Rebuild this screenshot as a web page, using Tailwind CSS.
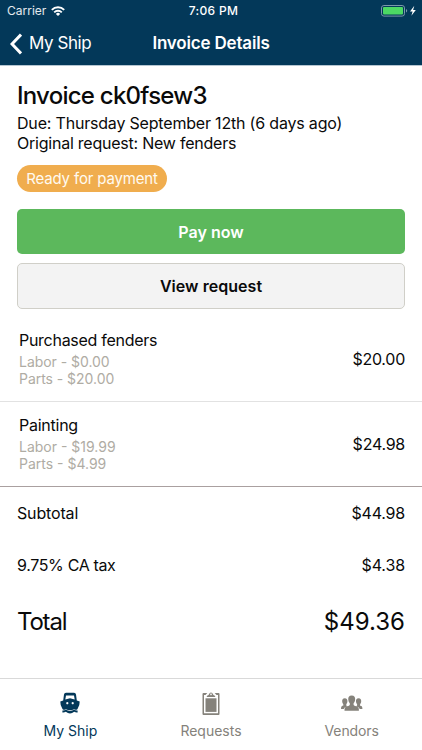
<!DOCTYPE html>
<html lang="en">
<head>
<meta charset="utf-8">
<meta name="viewport" content="width=device-width, initial-scale=1">
<title>Invoice Details</title>
<script src="https://cdn.jsdelivr.net/npm/@tailwindcss/browser@4"></script>
</head>
<body class="bg-white">
<div class="flex h-[750px] w-[422px] flex-col overflow-hidden bg-white font-['Inter',sans-serif] text-base text-[#0a0a0a]">
  <header class="h-[66px] shrink-0 border-b border-[#b5c6d2] bg-[#033859] text-white">
    <div class="grid h-[22px] grid-cols-3 items-center pr-[5px] pl-[7px] text-xs">
      <div class="flex items-center gap-[5px]"><span class="text-white/90">Carrier</span>
        <svg class="h-[10px] w-[14px]" viewBox="0 0 14 10" fill="none" stroke="currentColor" stroke-width="1.9"><path d="M.8 3.800a8.800 8.800 0 0 1 12.400 0M3.200 6.300a5.400 5.400 0 0 1 7.600 0"/><path d="M7 10 4.900 7.900a3 3 0 0 1 4.200 0z" fill="currentColor" stroke="none"/></svg>
      </div>
      <span class="pl-[3px] text-center font-medium tracking-[0.3px]">7:06 PM</span>
      <svg class="h-[12px] w-[36px] justify-self-end" viewBox="0 0 36 12"><rect x=".5" y=".5" width="23" height="10.6" rx="2.4" fill="none" stroke="#7b98aa"/><rect x="2" y="2" width="20" height="7.6" rx="1" fill="#4cd964"/><path d="M25 4v3.600q1.200-.5 1.200-1.800T25 4z" fill="#7b98aa"/><path d="M33.300.8 29 6.500h2.600l-1.200 4.300 4.400-5.900h-2.700z" fill="#fff"/></svg>
    </div>
    <div class="grid h-[43px] grid-cols-[1fr_auto_1fr] items-center text-[17px]">
      <div class="flex items-center gap-[7px] pl-[10px]">
        <svg class="h-[22px] w-[12px]" viewBox="0 0 12 22" fill="none" stroke="currentColor" stroke-width="3"><path d="M11 1.500 2 11l9 9.500"/></svg>
        <span class="tracking-[-0.45px]">My Ship</span>
      </div>
      <h1 class="font-semibold tracking-[-0.18px]">Invoice Details</h1>
    </div>
  </header>

  <main class="flex flex-1 flex-col">
    <section class="flex flex-col px-[17px] pt-[14px]">
      <h2 class="h-[33px] text-[24px] leading-[31px] font-medium tracking-[-0.75px]">Invoice ck0fsew3</h2>
      <p class="leading-[20px] tracking-[-0.19px]">Due: Thursday September 12th (6 days ago)</p>
      <p class="leading-[20px] tracking-[-0.23px]">Original request: New fenders</p>
      <span class="mt-[12px] flex h-[27px] w-[150px] items-center justify-center rounded-full bg-[#f0ad4e] pt-px text-[15px] tracking-[-0.16px] text-[#fffaf0]">Ready for payment</span>
      <button class="mt-[17px] h-[45px] rounded-[5px] bg-[#5cb85c] font-semibold text-white">Pay now</button>
      <button class="mt-[9px] h-[46px] rounded-[5px] border border-[#d0cfc8] bg-[#f3f3f3] font-semibold tracking-[0.05px]">View request</button>
    </section>

    <section class="mt-[8px]">
      <div class="flex h-[85px] items-center justify-between border-b border-[#e2e2e2] pr-[17px] pl-[19px]">
        <div class="pb-[2px]"><h3 class="mb-[3px] leading-[20px] tracking-[-0.28px]">Purchased fenders</h3>
          <p class="text-[14px] leading-[17px] tracking-[-0.04px] text-[#afaca4]">Labor - $0.00</p><p class="text-[14px] leading-[17px] tracking-[-0.04px] text-[#afaca4]">Parts - $20.00</p></div>
        <span class="tracking-[-0.25px]">$20.00</span>
      </div>
      <div class="flex h-[85px] items-center justify-between border-b border-[#aaa0a0] pr-[17px] pl-[19px]">
        <div class="pb-[2px]"><h3 class="mb-[3px] leading-[20px] tracking-[-0.25px]">Painting</h3>
          <p class="text-[14px] leading-[17px] text-[#afaca4]">Labor - $19.99</p><p class="text-[14px] leading-[17px] text-[#afaca4]">Parts - $4.99</p></div>
        <span class="tracking-[-0.25px]">$24.98</span>
      </div>
    </section>

    <section class="px-[17px]">
      <div class="flex h-[52px] items-center justify-between"><span class="tracking-[-0.15px]">Subtotal</span><span class="tracking-[-0.2px]">$44.98</span></div>
      <div class="flex h-[52px] items-center justify-between"><span class="tracking-[-0.35px]">9.75% CA tax</span><span class="tracking-[-0.1px]">$4.38</span></div>
      <div class="flex h-[60px] items-center justify-between pt-[2px] text-[24px]"><span class="tracking-[-1.2px]">Total</span><span>$49.36</span></div>
    </section>
  </main>

  <nav class="grid h-[72px] shrink-0 grid-cols-3 border-t border-[#d9d9d9] text-[14px] text-[#85827b]">
    <a class="flex flex-col items-center pt-[13px] text-[#033859]">
      <svg class="h-[24px] w-[24px]" viewBox="0 0 24 24" fill="currentColor"><path fill-rule="evenodd" d="M6 2.500Q6.200.7 8 .7h8q1.800 0 2 1.800l.8 5.900 2.900 1.200q.3 3.600-2.300 7.600-1.500 1.200-3.200 0-4.200 2.300-8.400 0-1.700 1.200-3.200 0Q2 13.200 2.300 9.600l2.900-1.200zM8 3.600l-.7 4L12 6.200l4.700 1.400-.7-4zM9.300 10a1.100 1.100 0 1 0 .01 0zM14.700 10a1.100 1.100 0 1 0 .01 0z"/><path d="M4.400 18.500q1.800.3 3.400-.7 4.200 2.200 8.400 0 1.600 1 3.400.7v1.900q-1.900.2-3.400-.6-4.200 3.600-8.400 0-1.500.8-3.400.6z"/></svg>
      <span class="mt-[5px] leading-[20px]">My Ship</span>
    </a>
    <a class="flex flex-col items-center pt-[13px]">
      <svg class="h-[24px] w-[24px]" viewBox="0 0 24 24" fill="currentColor"><path d="M4.500 1h3.800L6.500 3H5v18.200h14V3h-1.500l-1.800-2h3.800q1 0 1 1v20q0 1-1 1h-15q-1 0-1-1V2q0-1 1-1z"/><path d="M6.500 6.300h11v13.600h-11z"/><path fill-rule="evenodd" d="M7.600 4.900q.1-1.500 1.900-1.900.4-.2.600-.9Q10.500.4 12 .4t1.900 1.700q.2.700.6.900 1.800.4 1.900 1.900zM12 1.500a.8.800 0 1 0 .01 0z"/></svg>
      <span class="mt-[5px] leading-[20px]">Requests</span>
    </a>
    <a class="flex flex-col items-center pt-[13px]">
      <svg class="h-[24px] w-[24px]" viewBox="0 0 24 24" fill="currentColor"><path d="M11.700 3.600c2.700 0 3.700 1.700 3.400 4.200-.1 1.600-.7 2.700-1.500 3.400v1.700c.6 1 4.300 1.300 5 3.100.3.800.3 1.700.3 2.700H4.500c0-1 0-1.900.3-2.700.7-1.800 4.400-2.100 5-3.100v-1.700c-.8-.7-1.400-1.800-1.500-3.400-.3-2.500.7-4.200 3.400-4.200z"/><path id="side" d="M4.800 6.300c2 0 2.800 1.300 2.600 3.300-.1 1.300-.6 2.100-1.100 2.600v1.300c.2.300.9.500 1.600.8-2.200.7-3.700 1.200-4.200 2.700H1q0-2.100.5-2.600c.6-.5 1.600-.5 1.800-.9v-1.300c-.5-.5-1-1.300-1.100-2.600-.2-2 .6-3.300 2.600-3.300z"/><use href="#side" transform="matrix(-1 0 0 1 23.400 0)"/></svg>
      <span class="mt-[5px] leading-[20px] tracking-[-0.1px]">Vendors</span>
    </a>
  </nav>
</div>
</body>
</html>
